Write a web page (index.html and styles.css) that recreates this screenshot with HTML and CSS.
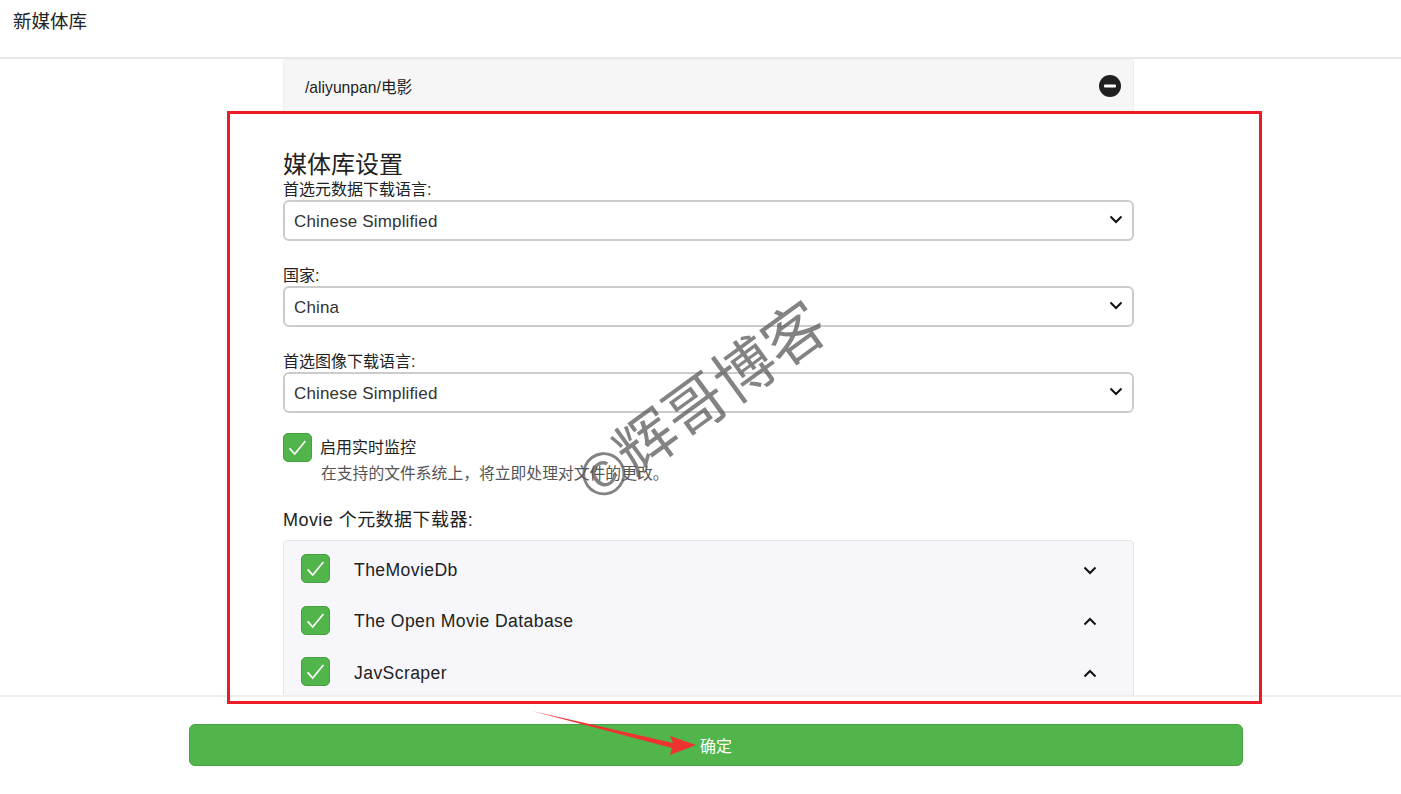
FILE: index.html
```html
<!DOCTYPE html>
<html lang="zh-CN">

<head>
    <meta charset="UTF-8">
    <title>新媒体库</title>
    <link rel="stylesheet" href="styles.css">
</head>

<body>

    <header class="dialog-header">
        <h2>新媒体库</h2>
    </header>

    <main class="dialog-body">
        <div class="content">
            <div class="path-row">
                <span>/aliyunpan/电影</span>
                <svg class="remove-icon" viewBox="0 0 22 22"><circle cx="11" cy="11" r="11" fill="#202020"/><rect x="5" y="9.500" width="12" height="3" rx="1" fill="#fff"/></svg>
            </div>

            <h3 class="section-title">媒体库设置</h3>

            <div class="field">
                <label>首选元数据下载语言:</label>
                <div class="select-wrap">
                    <select><option>Chinese Simplified</option></select>
                    <svg class="chevron" viewBox="0 0 14 9"><path d="M1.500 1.500 7 7l5.500-5.500"/></svg>
                </div>
            </div>

            <div class="field">
                <label>国家:</label>
                <div class="select-wrap">
                    <select><option>China</option></select>
                    <svg class="chevron" viewBox="0 0 14 9"><path d="M1.500 1.500 7 7l5.500-5.500"/></svg>
                </div>
            </div>

            <div class="field">
                <label>首选图像下载语言:</label>
                <div class="select-wrap">
                    <select><option>Chinese Simplified</option></select>
                    <svg class="chevron" viewBox="0 0 14 9"><path d="M1.500 1.500 7 7l5.500-5.500"/></svg>
                </div>
            </div>

            <div class="monitor-row">
                <span class="check"><svg viewBox="0 0 29 29"><path d="M6 15.500l5.500 6L23 7.500"/></svg></span>
                <span class="monitor-text">启用实时监控</span>
            </div>
            <p class="monitor-help">在支持的文件系统上，将立即处理对文件的更改。</p>

            <h4 class="list-title">Movie 个元数据下载器:</h4>

            <div class="fetcher-list">
                <div class="fetcher">
                    <span class="check"><svg viewBox="0 0 29 29"><path d="M6 15.500l5.500 6L23 7.500"/></svg></span>
                    <span class="fetcher-name">TheMovieDb</span>
                    <svg class="arrow" viewBox="0 0 14 9"><path d="M1.500 1.500 7 7l5.500-5.500"/></svg>
                </div>
                <div class="fetcher">
                    <span class="check"><svg viewBox="0 0 29 29"><path d="M6 15.500l5.500 6L23 7.500"/></svg></span>
                    <span class="fetcher-name">The Open Movie Database</span>
                    <svg class="arrow" viewBox="0 0 14 9"><path d="M1.500 7.500 7 2l5.500 5.500"/></svg>
                </div>
                <div class="fetcher">
                    <span class="check"><svg viewBox="0 0 29 29"><path d="M6 15.500l5.500 6L23 7.500"/></svg></span>
                    <span class="fetcher-name">JavScraper</span>
                    <svg class="arrow" viewBox="0 0 14 9"><path d="M1.500 7.500 7 2l5.500 5.500"/></svg>
                </div>
            </div>
        </div>
    </main>

    <footer class="dialog-footer">
        <button class="submit-button">确定</button>
    </footer>

    <!-- annotations drawn over the screenshot -->
    <div class="red-box"></div>
    <div class="watermark">©辉哥博客</div>
    <svg class="red-arrow" viewBox="0 0 170 50"><polygon points="0,0 141,32 138,25 164,34 138,44 140,37"/></svg>

</body>

</html>
```

FILE: styles.css
```css
/* Global Styles */
* {
    box-sizing: border-box;
}

body {
    font-family: "Liberation Sans", "Noto Sans CJK SC", sans-serif;
    background-color: #fff;
    color: #222;
    margin: 0;
    height: 794px;
    overflow: hidden;
    display: flex;
    flex-direction: column;
}

/* Header */
.dialog-header {
    height: 59px;
    flex-shrink: 0;
    padding: 11px 13px 0;
    border-bottom: 2px solid #e8e8e8;
}

.dialog-header h2 {
    margin: 0;
    font-size: 18.500px;
    font-weight: normal;
    line-height: 22px;
}

/* Body */
.dialog-body {
    flex: 1;
    min-height: 0;
    overflow: hidden;
    padding-left: 283px;
}

.content {
    width: 851px;
}

.path-row {
    height: 54px;
    padding: 0 12px 0 21px;
    display: flex;
    align-items: center;
    justify-content: space-between;
    background-color: #f6f6f6;
    border: 1px solid #eee;
    border-bottom: none;
    border-radius: 4px 4px 0 0;
    font-size: 15.700px;
}

.remove-icon {
    width: 22px;
    height: 22px;
    margin-bottom: 2px;
}

.section-title {
    margin: 37px 0 0;
    font-size: 24px;
    font-weight: normal;
    line-height: 29px;
}

.field {
    margin-bottom: 24px;
}

.field label {
    display: block;
    font-size: 16px;
    line-height: 21px;
}

.select-wrap {
    position: relative;
}

.select-wrap select {
    display: block;
    width: 100%;
    height: 41px;
    padding: 1px 9px 0;
    appearance: none;
    background-color: #fff;
    border: 2px solid #ccc;
    border-radius: 6px;
    color: #333;
    font-family: inherit;
    font-size: 17px;
    letter-spacing: 0.15px;
}

.chevron,
.arrow {
    width: 14px;
    height: 9px;
    fill: none;
    stroke: #111;
    stroke-width: 2;
}

.chevron {
    position: absolute;
    top: 15px;
    right: 11px;
}

/* Checkboxes */
.check {
    width: 29px;
    height: 29px;
    flex-shrink: 0;
    background-color: #52b54b;
    border: 1px solid #46a040;
    border-radius: 5px;
    display: block;
}

.check svg {
    display: block;
    width: 27px;
    height: 27px;
    fill: none;
    stroke: #fff;
    stroke-width: 1.800;
}

.monitor-row {
    display: flex;
    align-items: center;
    gap: 8px;
    margin-top: -4px;
}

.monitor-text {
    font-size: 16px;
    margin-bottom: 4px;
}

.monitor-help {
    margin: 2px 0 0 38px;
    font-size: 15.800px;
    line-height: 20px;
    color: #555;
}

.list-title {
    margin: 25px 0 0;
    font-size: 18px;
    font-weight: normal;
    line-height: 22px;
    letter-spacing: 0.45px;
}

/* Fetcher list */
.fetcher-list {
    margin-top: 9px;
    padding: 2px 0 0 17px;
    background-color: #f7f6fa;
    border: 1px solid #e6e6e6;
    border-radius: 4px;
}

.fetcher {
    height: 51.500px;
    padding-right: 36px;
    display: flex;
    align-items: center;
}

.fetcher-name {
    flex: 1;
    margin: 3px 0 0 24px;
    font-size: 17.600px;
    letter-spacing: 0.4px;
}

.arrow {
    margin-top: 3px;
}

/* Footer */
.dialog-footer {
    height: 99px;
    flex-shrink: 0;
    padding: 27px 0 0 189px;
    border-top: 2px solid #eee;
    background-color: #fff;
}

.submit-button {
    display: block;
    width: 1054px;
    height: 42px;
    background-color: #52b54b;
    border: 1px solid #46a040;
    border-radius: 6px;
    color: #fff;
    font-family: inherit;
    font-size: 16px;
}

/* Annotations */
.red-box {
    position: absolute;
    left: 227px;
    top: 111px;
    width: 1035px;
    height: 593px;
    border: 3px solid #ed1c24;
}

.watermark {
    position: absolute;
    left: 558px;
    top: 362px;
    font-size: 61px;
    line-height: 80px;
    white-space: nowrap;
    color: rgba(90, 90, 90, 0.75);
    transform: rotate(-36deg);
}

.red-arrow {
    position: absolute;
    left: 532px;
    top: 711px;
    width: 170px;
    height: 50px;
    fill: #ee3232;
}
```
